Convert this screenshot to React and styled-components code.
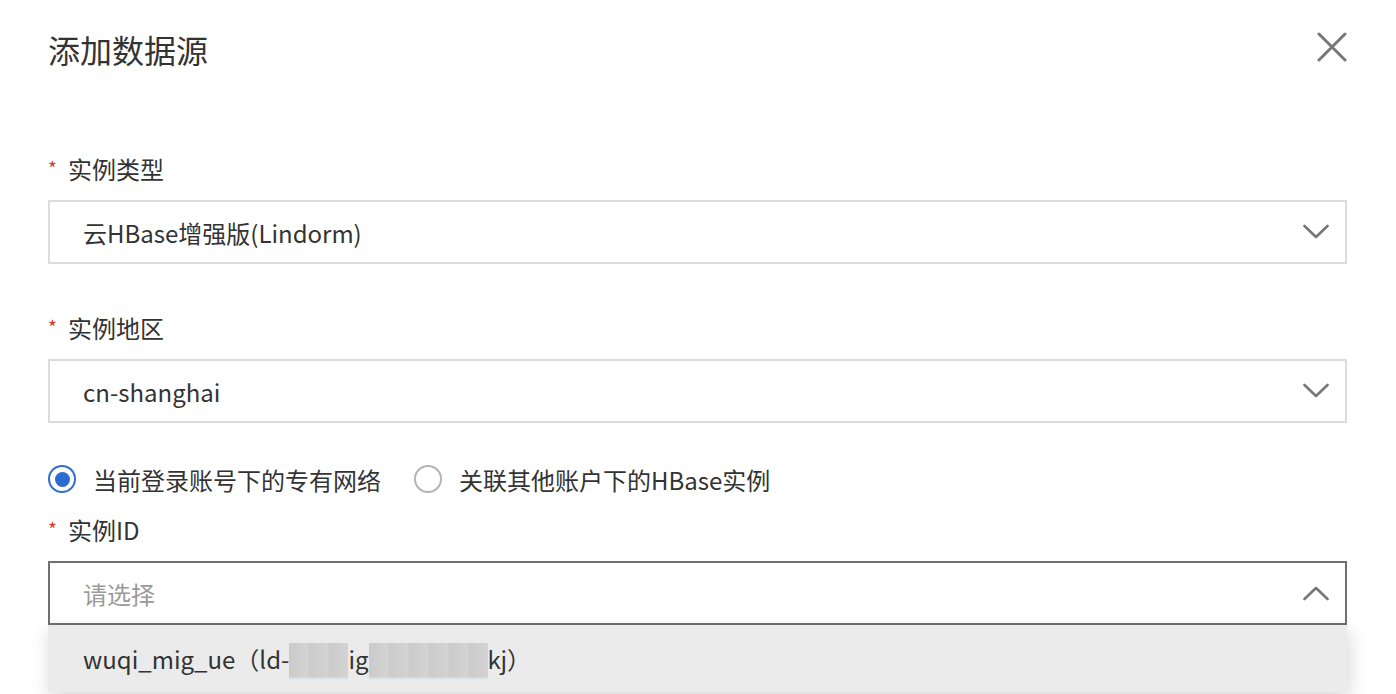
import React from "react";
import styled, { createGlobalStyle } from "styled-components";

const Global = createGlobalStyle`
  html, body { margin: 0; padding: 0; background: #fff; }
  body { font-family: "Noto Sans CJK SC", "Noto Sans", sans-serif; color: #333; }
  * { box-sizing: border-box; }
`;

const Page = styled.div`
  min-height: 694px;
  padding: 0 49px 0 48px;
  display: flex;
  flex-direction: column;
`;

const Header = styled.div`
  display: flex;
  align-items: center;
  justify-content: space-between;
  height: 48px;
  margin-top: 25px;
  margin-bottom: 77px;
`;

const Title = styled.h1`
  margin: 0;
  font-size: 32px;
  font-weight: 400;
  line-height: 48px;
  color: #333;
`;

const CloseButton = styled.button`
  border: 0;
  background: none;
  padding: 0;
  margin-right: -1px;
  margin-top: -4px;
  width: 32px;
  height: 32px;
  display: flex;
  align-items: center;
  justify-content: center;
  cursor: pointer;
`;

const Label = styled.div`
  display: flex;
  align-items: center;
  height: 36px;
  font-size: 24px;
  color: #333;
  margin-bottom: 14px;
`;

const Required = styled.span`
  color: #d83a2c;
  font-size: 19px;
  width: 20px;
  align-self: flex-start;
  margin-top: 4px;
`;

const Field = styled.div`
  position: relative;
  margin-bottom: ${(p) => p.$mb || 0}px;
`;

const Select = styled.div`
  height: 64px;
  border: 2px solid ${(p) => (p.$open ? "#6f6f6f" : "#dcdcdc")};
  background: #fff;
  display: flex;
  align-items: center;
  justify-content: space-between;
  padding: 0 16px 0 33px;
  font-size: 24px;
  color: ${(p) => (p.$placeholder ? "#9a9a9a" : "#333")};
`;

const Menu = styled.div`
  position: absolute;
  left: 0;
  right: 0;
  top: 64px;
  z-index: 10;
  background: #ebebeb;
  box-shadow: 2px 6px 18px rgba(0, 0, 0, 0.16);
`;

const MenuItem = styled.div`
  height: 67px;
  display: flex;
  align-items: center;
  padding-left: 35px;
  font-size: 24px;
  color: #333;
  white-space: pre;
`;

const Mosaic = styled.span`
  display: inline-block;
  width: ${(p) => p.$w}px;
  height: 36px;
  margin-top: 4px;
  background: repeating-linear-gradient(
      90deg,
      #cbcbcb 0px,
      #d3d3d3 19px,
      #c9c9c9 20px
    ),
    #d0d0d0;
  border-bottom: 2px solid #d3dde8;
`;

const RadioGroup = styled.div`
  display: flex;
  align-items: center;
  height: 36px;
  margin-bottom: 14px;
`;

const RadioOption = styled.label`
  display: flex;
  align-items: center;
  gap: 17px;
  font-size: 24px;
  color: #333;
  margin-right: 33px;
`;

const RadioCircle = styled.span`
  width: 28px;
  height: 28px;
  border-radius: 50%;
  border: 2px solid ${(p) => (p.$checked ? "#2f6fcf" : "#b4b4b4")};
  display: flex;
  align-items: center;
  justify-content: center;
  &::after {
    content: "";
    width: 15px;
    height: 15px;
    border-radius: 50%;
    background: ${(p) => (p.$checked ? "#2b6cd0" : "transparent")};
  }
`;

const Chevron = ({ up }) => (
  <svg width="26" height="16" viewBox="0 0 26 16">
    <polyline
      points={up ? "1.5,14 13,3 24.5,14" : "1.5,2 13,13 24.5,2"}
      fill="none"
      stroke="#777"
      strokeWidth="2.6"
      strokeLinecap="round"
      strokeLinejoin="round"
    />
  </svg>
);

const XIcon = () => (
  <svg width="30" height="30" viewBox="0 0 30 30">
    <path d="M2 2 L28 28 M28 2 L2 28" stroke="#777" strokeWidth="3" strokeLinecap="round" />
  </svg>
);

export default function App() {
  return (
    <>
      <Global />
      <Page>
        <Header>
          <Title>添加数据源</Title>
          <CloseButton aria-label="close">
            <XIcon />
          </CloseButton>
        </Header>

        <Label>
          <Required>*</Required>实例类型
        </Label>
        <Field $mb={45}>
          <Select>
            <span>云HBase增强版(Lindorm)</span>
            <Chevron />
          </Select>
        </Field>

        <Label>
          <Required>*</Required>实例地区
        </Label>
        <Field $mb={38}>
          <Select>
            <span>cn-shanghai</span>
            <Chevron />
          </Select>
        </Field>

        <RadioGroup>
          <RadioOption>
            <RadioCircle $checked />
            当前登录账号下的专有网络
          </RadioOption>
          <RadioOption>
            <RadioCircle />
            关联其他账户下的HBase实例
          </RadioOption>
        </RadioGroup>

        <Label>
          <Required>*</Required>实例ID
        </Label>
        <Field>
          <Select $open $placeholder>
            <span>请选择</span>
            <Chevron up />
          </Select>
          <Menu>
            <MenuItem>
              wuqi_mig_ue（ld-<Mosaic $w={59} />ig<Mosaic $w={119} />kj）
            </MenuItem>
          </Menu>
        </Field>
      </Page>
    </>
  );
}
